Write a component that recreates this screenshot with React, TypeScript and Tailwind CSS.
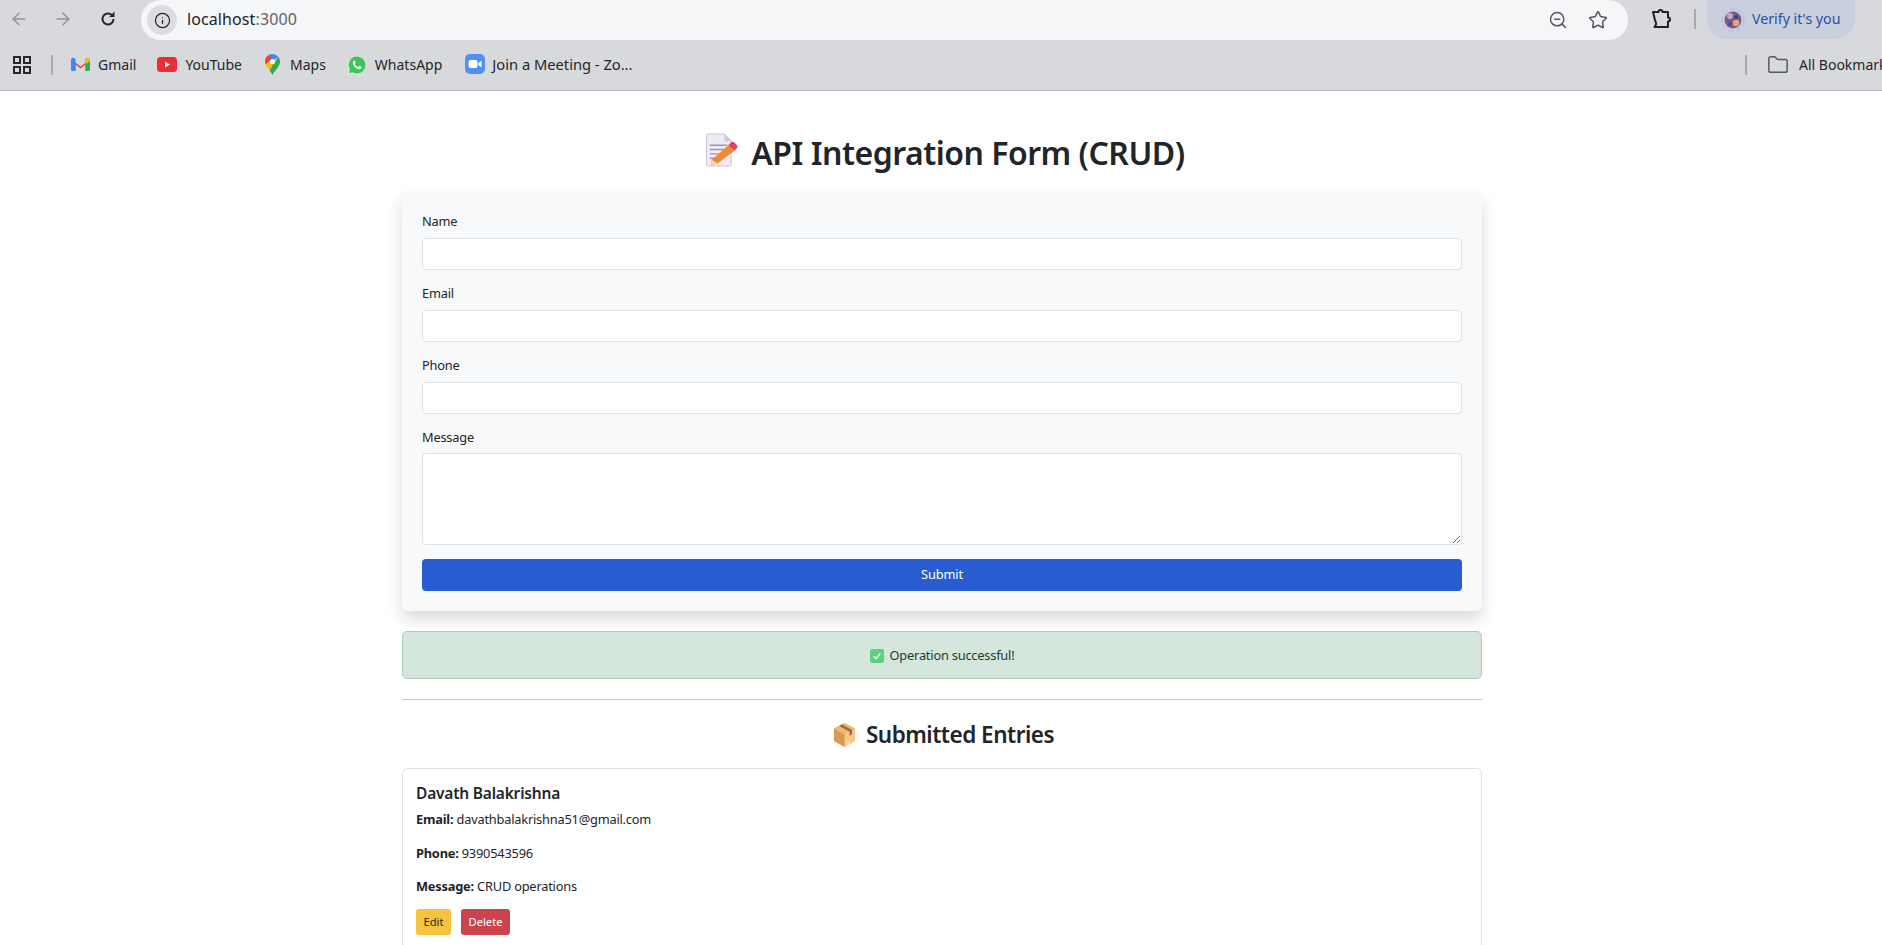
import React from "react";
import { ArrowLeft, ArrowRight, Info, ZoomOut, Star, Folder } from "lucide-react";

const font = { fontFamily: '"Noto Sans", sans-serif' };

function Reload() {
  return (
    <svg width="20" height="20" viewBox="0 0 20 20" className="shrink-0">
      <path d="M15.500 10a5.500 5.500 0 1 1-1.700-4" fill="none" stroke="#26282c" strokeWidth="2" />
      <path d="M16.500 2.500v5.500H11z" fill="#26282c" />
    </svg>
  );
}
function Grid() {
  return (
    <svg width="18" height="18" viewBox="0 0 18 18" className="shrink-0">
      <path d="M1 1h6v6H1zM11 1h6v6h-6zM1 11h6v6H1zM11 11h6v6h-6z" fill="none" stroke="#26282c" strokeWidth="2" />
    </svg>
  );
}
function Gmail() {
  return (
    <svg width="19" height="15" viewBox="0 0 19 15" className="shrink-0">
      <path d="M1 14V3l8.500 6.500L18 3v11h-3.500V7.500L9.500 11.500 4.500 7.500V14z" fill="#e5483b" />
      <path d="M0 3.200C0 1 2.200.2 3.800 1.400L4.500 2v12H1.300A1.300 1.300 0 0 1 0 12.700z" fill="#4285f4" />
      <path d="M19 3.200C19 1 16.800.2 15.200 1.400L14.500 2v12h3.200A1.300 1.300 0 0 0 19 12.700z" fill="#34a853" />
      <path d="M14.500 2l1-.8c1.500-1 3.500-.2 3.500 2v.8l-4.500 3.500z" fill="#fbbc04" />
    </svg>
  );
}
function YouTube() {
  return (
    <svg width="20" height="15" viewBox="0 0 20 15" className="shrink-0">
      <rect width="20" height="15" rx="3.500" fill="#ee2b3b" />
      <path d="M8 4.500v6l5-3z" fill="#fff" />
    </svg>
  );
}
function Maps() {
  return (
    <svg width="15" height="21" viewBox="0 0 15 21" className="shrink-0">
      <path d="M7.500 0a7.500 7.500 0 0 1 5.800 2.700L7.500 7.500 3.800 1A7.500 7.500 0 0 1 7.500 0z" fill="#4285f4" />
      <path d="M3.800 1A7.500 7.500 0 0 0 0 7.500c0 1 .2 2 .6 3L7.500 5z" fill="#e94235" />
      <path d="M.6 10.500c.9 2.200 2.700 3.800 4 6L11 9 7.500 5z" fill="#fbbc04" />
      <path d="M4.600 16.500c1.200 1.500 2 2.900 2.900 4.500 1-2.200 3-4.600 4.700-6.800C13.900 12 15 10 15 7.500c0-1.800-.6-3.500-1.700-4.800L9 9z" fill="#34a853" />
      <circle cx="7.500" cy="7.500" r="2.600" fill="#fff" />
    </svg>
  );
}
function WhatsApp() {
  return (
    <svg width="20" height="20" viewBox="0 0 20 20" className="shrink-0">
      <path d="M10 1a9 9 0 0 0-7.700 13.600L1 19l4.500-1.200A9 9 0 1 0 10 1z" fill="#3fc45a" stroke="#e6f3e8" strokeWidth="1" />
      <path d="M7.300 5.500c-.5 0-1.400.8-1.400 2.200 0 3 3.300 6.300 6.500 6.500 1.400 0 2.200-1 2.200-1.700 0-.3 0-.6-.3-.7l-1.800-.9c-.3-.1-.5 0-.7.200l-.7.800c-.2.200-.4.200-.6.100-1.100-.5-2-1.400-2.600-2.500-.1-.2 0-.4.100-.6l.6-.7c.1-.2.200-.4.100-.6l-.8-1.800c-.1-.2-.3-.3-.6-.3z" fill="#fff" />
    </svg>
  );
}
function Zoom() {
  return (
    <svg width="20" height="20" viewBox="0 0 20 20" className="shrink-0">
      <rect width="20" height="20" rx="5" fill="#4f90f5" />
      <rect x="3.500" y="6" width="9" height="8" rx="2" fill="#fff" />
      <path d="M13.300 9l3.200-2.500v7L13.300 11z" fill="#fff" />
    </svg>
  );
}
function Puzzle() {
  return (
    <svg width="21" height="21" viewBox="0 0 21 21" className="shrink-0">
      <path d="M2 3h5.500a2 2 0 0 1 4 0H17v5.500a2 2 0 0 1 0 4V18H3.500l1.800-3-1.300-4L2 3z" fill="none" stroke="#1f2124" strokeWidth="2" strokeLinejoin="round" />
    </svg>
  );
}
function Avatar() {
  return (
    <svg width="24" height="24" viewBox="0 0 24 24" className="shrink-0">
      <circle cx="12" cy="12" r="11" fill="none" stroke="#a9bde6" strokeWidth="1" strokeDasharray="6 2" />
      <circle cx="12" cy="12" r="8.500" fill="#7a5a8e" />
      <circle cx="9" cy="8" r="3" fill="#c4a8c8" />
      <circle cx="15" cy="15" r="3.200" fill="#e0a878" />
      <circle cx="15" cy="9" r="2" fill="#4e3b6e" />
      <circle cx="9" cy="16" r="2" fill="#5b4a80" />
    </svg>
  );
}
function Memo() {
  return (
    <svg width="32" height="34" viewBox="0 0 33 34" className="shrink-0">
      <path d="M2 .5h17l7 7V32a1.500 1.500 0 0 1-1.500 1.500H2A1.500 1.500 0 0 1 .5 32V2A1.500 1.500 0 0 1 2 .5z" fill="#efeaf6" stroke="#c9c1d6" />
      <path d="M19 .5V8h7z" fill="#cfc7de" />
      <path d="M4 12h18M4 16.500h16M4 21h12M4 25.500h8" stroke="#9d95ad" strokeWidth="1.500" />
      <path d="M6 27l17-15 6 6-17 13-7 2z" fill="#f08a32" />
      <path d="M23 12l3-3c.8-.7 2-.7 3 0l3 3c.8.9.8 2.100 0 3l-3 3z" fill="#e9405f" />
      <path d="M6 27l-1.500 6 7.500-2z" fill="#f6d7a8" />
    </svg>
  );
}
function BoxIcon() {
  return (
    <svg width="21" height="24" viewBox="0 0 21 24" className="shrink-0">
      <path d="M10.500 0L21 5.500v12.500L10.500 24 0 18V5.500z" fill="#f4c883" />
      <path d="M0 5.500L10.500 11v13L0 18z" fill="#d89a55" />
      <path d="M10.500 0L21 5.500 10.500 11 0 5.500z" fill="#eeb96f" />
      <path d="M5 3l10.500 5.500v4l2.500-1.300V7L8 1.500z" fill="#9a6a42" />
      <rect x="12.500" y="18" width="3" height="3" fill="#e8dcc8" />
    </svg>
  );
}
function CheckBox() {
  return (
    <span className="w-[14px] h-[14px] rounded-[2px] bg-[#5fd07f] flex items-center justify-center shrink-0">
      <svg width="10" height="10" viewBox="0 0 9 9"><path d="M1.500 4.800L3.600 7 7.500 2" fill="none" stroke="#fff" strokeWidth="1.100" /></svg>
    </span>
  );
}
function Bookmark({ icon, label, gap, ml }: { icon: React.ReactNode; label: string; gap: string; ml: string }) {
  return (
    <div className={`flex items-center ${gap} ${ml}`}>
      {icon}
      <span className="text-[14px] text-[#23262a] whitespace-nowrap">{label}</span>
    </div>
  );
}
function Field({ label }: { label: string }) {
  return (
    <div className="mb-[14px]">
      <label className="block text-[12.800px] tracking-[-0.2px] leading-[19px] mb-[7px] text-[#212529]">{label}</label>
      <input className="block w-full h-[32px] bg-white border border-[#dee2e6] rounded-[4px]" />
    </div>
  );
}

export default function App() {
  return (
    <div className="h-[945px] overflow-hidden bg-white text-[#212529]" style={font}>
      <div className="h-[91px] bg-[#d8d9dc] border-b border-[#b9babd] overflow-hidden">
        <div className="h-[43px] flex items-start">
          <ArrowLeft size={20} strokeWidth={1.800} className="text-[#909398] ml-[9px] mt-[9px]" />
          <ArrowRight size={20} strokeWidth={1.800} className="text-[#909398] ml-[24px] mt-[9px]" />
          <div className="ml-[25px] mt-[9px]"><Reload /></div>
          <div className="ml-[23px] w-[1487px] h-[40px] bg-[#f5f6f8] rounded-[20px] flex items-center">
            <div className="ml-[6px] w-[30px] h-[30px] rounded-full bg-[#dcdde0] flex items-center justify-center">
              <Info size={17} strokeWidth={1.800} className="text-[#26282c]" />
            </div>
            <span className="ml-[10px] text-[16px] tracking-[0.1px] leading-[20px] -mt-[2px] text-[#202327]">localhost<span className="text-[#5f6368]">:3000</span></span>
            <ZoomOut size={20} strokeWidth={1.800} className="text-[#55585d] ml-auto" />
            <Star size={20} strokeWidth={1.800} className="text-[#55585d] ml-[20px] mr-[20px]" />
          </div>
          <div className="ml-[23px] mt-[9px]"><Puzzle /></div>
          <div className="ml-[22px] mt-[9px] w-[2px] h-[20px] bg-[#a8aab0]" />
          <div className="ml-[11px] h-[39px] w-[148px] rounded-b-[20px] bg-[#c9cfdc] flex items-center">
            <div className="ml-[14px]"><Avatar /></div>
            <span className="ml-[7px] text-[14.200px] leading-[20px] -mt-[2px] text-[#2a4fa8] whitespace-nowrap">Verify it's you</span>
          </div>
        </div>
        <div className="h-[43px] flex items-center">
          <div className="ml-[13px]"><Grid /></div>
          <div className="w-[2px] h-[20px] bg-[#a8aab0] ml-[20px] shrink-0" />
          <Bookmark icon={<Gmail />} label="Gmail" gap="gap-[8px]" ml="ml-[18px]" />
          <Bookmark icon={<YouTube />} label="YouTube" gap="gap-[8px]" ml="ml-[21px]" />
          <Bookmark icon={<Maps />} label="Maps" gap="gap-[10px]" ml="ml-[23px]" />
          <Bookmark icon={<WhatsApp />} label="WhatsApp" gap="gap-[8px]" ml="ml-[21px]" />
          <div className="flex items-center gap-[7px] ml-[23px]">
            <Zoom />
            <span className="text-[14.700px] text-[#23262a] whitespace-nowrap">Join a Meeting - Zo...</span>
          </div>
          <div className="w-[2px] h-[20px] bg-[#a8aab0] ml-auto shrink-0" />
          <Folder size={22} strokeWidth={1.600} className="text-[#55585d] ml-[20px] shrink-0" />
          <span className="ml-[10px] text-[14px] text-[#23262a] whitespace-nowrap w-[83px] overflow-hidden shrink-0">All Bookmarks</span>
        </div>
      </div>

      <div className="w-[1080px] ml-[402px]">
        <h2 className="mt-[42px] h-[59px] pl-[7px] flex items-start justify-center gap-[13px] text-[32px] leading-[40px] font-semibold tracking-[-0.5px] text-[#212529]">
          <Memo />
          <span>API Integration Form (CRUD)</span>
        </h2>
        <div className="h-[419px] bg-[#f8f9fa] rounded-[6px] shadow-[0_8px_16px_rgba(0,0,0,0.15)] p-[20px] pt-[20px]">
          <Field label="Name" />
          <Field label="Email" />
          <Field label="Phone" />
          <div className="mb-[14px]">
            <label className="block text-[12.800px] tracking-[-0.2px] leading-[19px] mb-[6px]">Message</label>
            <textarea className="block w-full h-[92px] bg-white border border-[#dee2e6] rounded-[4px]" />
          </div>
          <button className="block w-full h-[32px] bg-[#285cd0] text-white rounded-[4px] text-[12.800px] tracking-[-0.1px]">Submit</button>
        </div>
        <div className="mt-[20px] h-[48px] pt-[1px] bg-[#d5e6dc] border border-[#a9cdb9] rounded-[5px] flex items-center justify-center gap-[6px] text-[12.800px] tracking-[-0.2px] text-[#1f3b2c]">
          <CheckBox />
          <span>Operation successful!</span>
        </div>
        <hr className="mt-[20px] border-t border-[#c9c9c9]" />
        <h4 className="mt-[17px] h-[36px] pl-[4px] flex items-center justify-center gap-[11px] text-[22.500px] font-semibold tracking-[-0.5px]">
          <BoxIcon />
          <span>Submitted Entries</span>
        </h4>
        <div className="mt-[15px] h-[200px] border border-[#dee2e6] rounded-[5px] pl-[13px] pt-[13px]">
          <h5 className="text-[15.500px] leading-[22px] font-semibold tracking-[-0.2px]">Davath Balakrishna</h5>
          <p className="mt-[6px] text-[12.800px] tracking-[-0.2px] leading-[19px] mb-[15px]"><strong className="font-bold">Email:</strong> davathbalakrishna51@gmail.com</p>
          <p className="text-[12.800px] tracking-[-0.2px] leading-[19px] mb-[14px]"><strong className="font-bold">Phone:</strong> 9390543596</p>
          <p className="text-[12.800px] tracking-[-0.2px] leading-[19px] mb-[13px]"><strong className="font-bold">Message:</strong> CRUD operations</p>
          <div className="flex gap-[10px]">
            <button className="w-[35px] h-[26px] rounded-[3px] bg-[#f6c33f] text-[#212529] text-[11.200px]">Edit</button>
            <button className="w-[49px] h-[26px] rounded-[3px] bg-[#cb444c] text-white text-[11.200px]">Delete</button>
          </div>
        </div>
      </div>
    </div>
  );
}
